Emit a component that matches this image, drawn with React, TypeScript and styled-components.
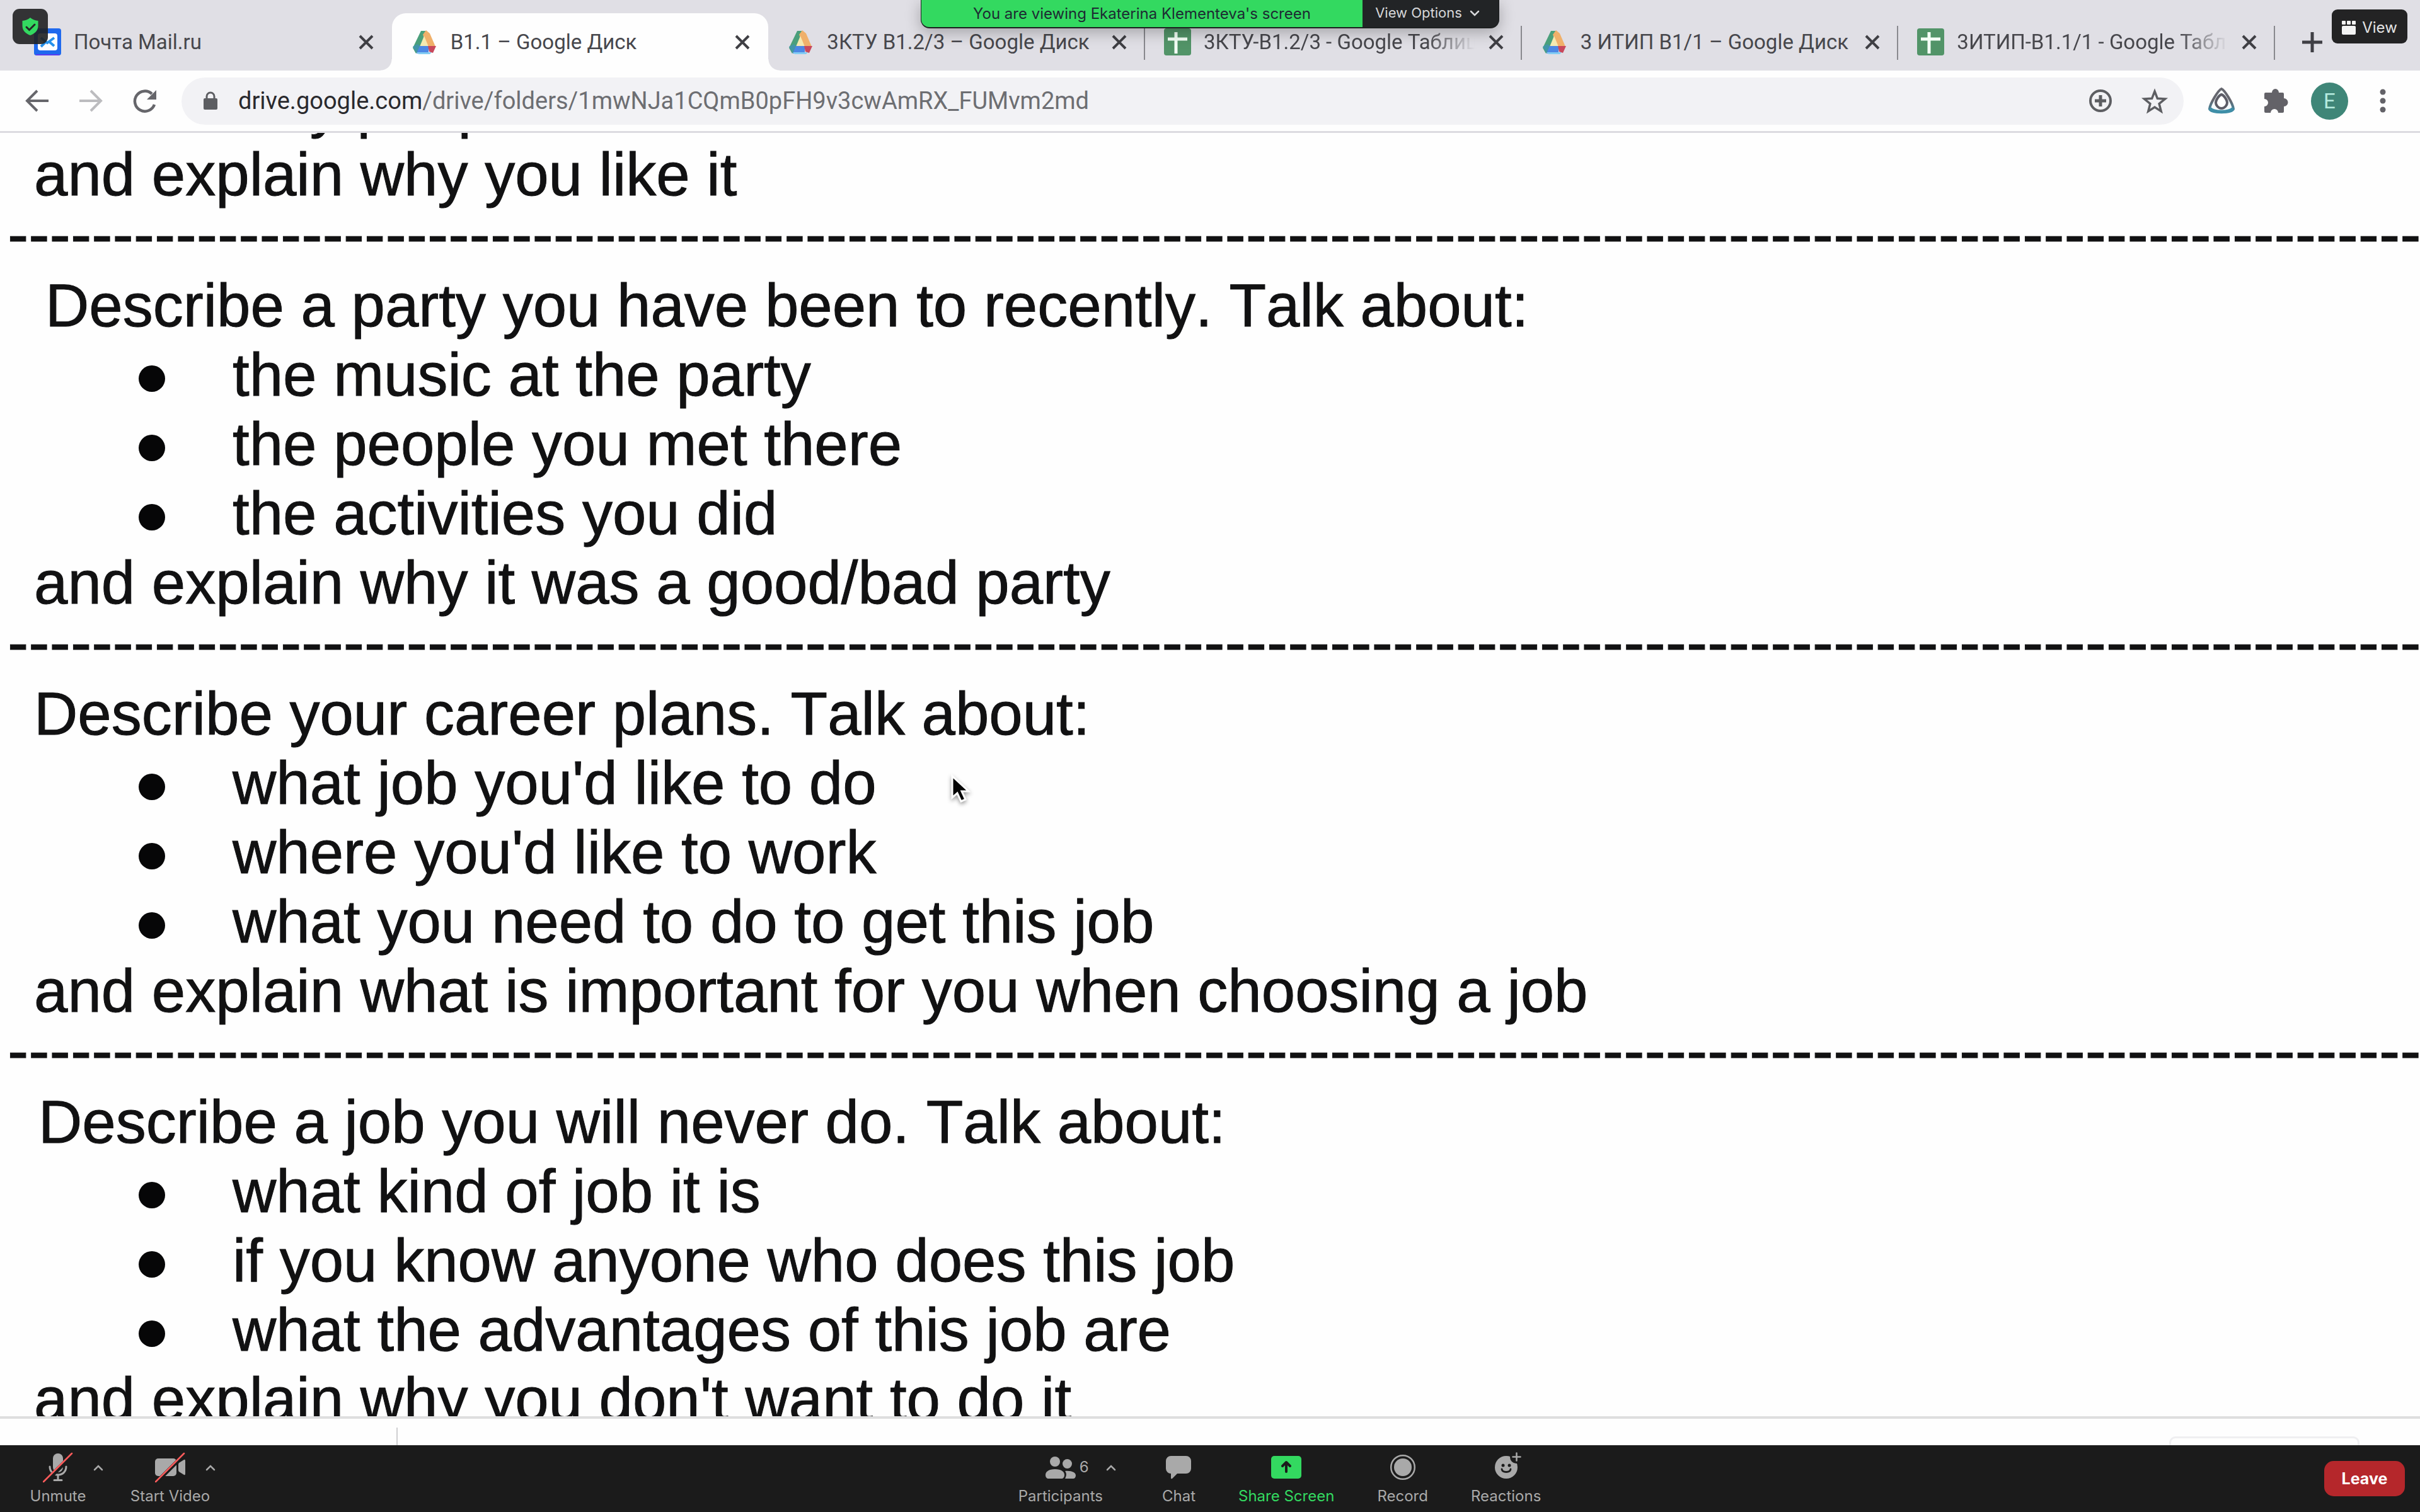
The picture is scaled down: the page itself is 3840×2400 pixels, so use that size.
import React from "react";
import styled, { createGlobalStyle, css } from "styled-components";

const GlobalStyle = createGlobalStyle`
  *, *::before, *::after { box-sizing: border-box; }
  html, body { margin: 0; background: #fefefe; }
  button { font: inherit; color: inherit; border: 0; padding: 0; background: none; cursor: pointer; }
  svg { display: block; }
`;

const UI_FONT = `Roboto, "Noto Sans", sans-serif`;
const MEETING_FONT = `Inter, "Liberation Sans", sans-serif`;
const DOC_FONT = `"Liberation Sans", Arial, sans-serif`;

const Screen = styled.div`
  position: relative;
  display: flex;
  flex-direction: column;
  height: 100vh;
  overflow: hidden;
  background: #fefefe;
`;

/* ---------- browser tabs ---------- */

const TabStrip = styled.nav`
  display: flex;
  align-items: stretch;
  flex: none;
  height: 112px;
  padding: 21px 230px 0 24px;
  background: #e0dfe5;
  font-family: ${UI_FONT};
  position: relative;
`;

const TabItem = styled.div<{ $active?: boolean; $divided?: boolean }>`
  position: relative;
  flex: 1 1 0;
  min-width: 0;
  display: flex;
  align-items: center;
  gap: 20px;
  padding: 0 27px 0 30px;
  color: #47474c;
  ${(p) =>
    p.$divided &&
    css`
      &::after {
        content: "";
        position: absolute;
        right: 0;
        top: 20px;
        width: 2px;
        height: 54px;
        background: #89898e;
      }
    `}
  ${(p) =>
    p.$active &&
    css`
      background: #fefefe;
      border-radius: 22px 22px 0 0;
      &::before,
      &::after {
        content: "";
        position: absolute;
        bottom: 0;
        width: 18px;
        height: 18px;
      }
      &::before {
        right: 100%;
        background: radial-gradient(circle at 0 0, transparent 17px, #fefefe 18px);
      }
      &::after {
        left: 100%;
        background: radial-gradient(circle at 100% 0, transparent 17px, #fefefe 18px);
      }
    `}
`;

const TabIcon = styled.span`
  flex: none;
  width: 43px;
  height: 43px;
`;

const TabTitle = styled.span<{ $fade?: boolean }>`
  flex: 1;
  min-width: 0;
  overflow: hidden;
  white-space: nowrap;
  font-size: 33px;
  line-height: 48px;
  ${(p) =>
    p.$fade &&
    css`
      mask-image: linear-gradient(to right, #000 calc(100% - 76px), transparent);
    `}
`;

const TabClose = styled.button`
  flex: none;
  width: 28px;
  height: 28px;
  color: #3f3f44;
`;

const NewTab = styled.button`
  position: absolute;
  right: 154px;
  top: 50px;
  width: 34px;
  height: 34px;
  color: #3f3f44;
`;

/* ---------- address bar ---------- */

const Toolbar = styled.div`
  display: flex;
  align-items: center;
  flex: none;
  height: 99px;
  padding: 0 46px 0 37px;
  border-bottom: 3px solid #dcdbe0;
  font-family: ${UI_FONT};
`;

const NavButtons = styled.div`
  display: flex;
  gap: 41px;
  margin-right: 37px;
`;

const NavButton = styled.button<{ $muted?: boolean }>`
  width: 44px;
  height: 44px;
  color: ${(p) => (p.$muted ? "#bcbcbf" : "#66666b")};
`;

const AddressBar = styled.div`
  flex: 1;
  min-width: 0;
  display: flex;
  align-items: center;
  height: 75px;
  padding: 0 24px 0 30px;
  border-radius: 38px;
  background: #f2f2f5;
  color: #5d5e62;
`;

const LockSlot = styled.span`
  width: 32px;
  height: 36px;
  margin-right: 28px;
`;

const Address = styled.div`
  flex: 1;
  min-width: 0;
  overflow: hidden;
  white-space: nowrap;
  font-size: 38px;
  line-height: 48px;
  color: #6d6e72;
`;

const Domain = styled.span`
  color: #29292d;
`;

const AddressActions = styled.div`
  display: flex;
  gap: 42px;
`;

const Extensions = styled.div`
  display: flex;
  align-items: center;
  gap: 42px;
  margin-left: 38px;
  color: #636268;
`;

const IconButton = styled.button<{ $wide?: number }>`
  width: ${(p) => p.$wide ?? 44}px;
  height: 44px;
`;

const Avatar = styled.button`
  width: 59px;
  height: 59px;
  margin-left: -8px;
  border-radius: 50%;
  background: #3f8678;
  color: #b5ece0;
  font-size: 33px;
  line-height: 59px;
`;

/* ---------- document ---------- */

const Page = styled.main`
  flex: 1;
  min-height: 0;
  overflow: hidden;
  font-family: ${DOC_FONT};
  font-size: 96px;
  line-height: 110px;
  font-kerning: none;
  -webkit-text-stroke: 1px #111112;
  color: #111112;
  white-space: nowrap;
`;

const Sheet = styled.article`
  margin-top: -99px;
  padding-left: 54px;
`;

const Prompt = styled.p<{ $indent?: number }>`
  margin: 0;
  padding-left: ${(p) => p.$indent ?? 0}px;
  font-size: inherit;
`;

const Points = styled.ul`
  margin: 0;
  padding: 0;
  list-style: none;
`;

const Point = styled.li`
  display: flex;
  align-items: center;
  padding-left: 166px;
  &::before {
    content: "";
    flex: none;
    width: 42px;
    height: 42px;
    margin: 12px 107px 0 0;
    border-radius: 50%;
    background: #060607;
  }
`;

const CutLine = styled.div`
  height: 98px;
  margin-left: -42px;
  overflow: hidden;
  font-size: 100px;
  line-height: 79px;
`;

const PageFooter = styled.footer`
  display: flex;
  justify-content: space-between;
  flex: none;
  height: 46px;
  padding: 0 96px 0 629px;
  border-top: 4px solid #dededf;
  background: #fefefe;
`;

const FooterRule = styled.span`
  width: 2px;
  margin-top: 14px;
  background: #cfcfd1;
`;

const FooterCard = styled.span`
  width: 302px;
  margin-top: 28px;
  border: 3px solid #efeff1;
  border-bottom: 0;
  border-radius: 10px 10px 0 0;
`;

/* ---------- meeting overlays ---------- */

const ShareBanner = styled.div`
  position: absolute;
  top: 0;
  left: 50%;
  transform: translateX(-50%);
  display: flex;
  height: 45px;
  overflow: hidden;
  border: solid #1d1f20;
  border-width: 0 1px 2px;
  border-radius: 0 0 14px 14px;
  background: #222426;
  box-shadow: 0 6px 24px rgba(0, 0, 0, 0.28);
  font-family: ${MEETING_FONT};
  font-size: 24px;
  line-height: 28px;
  white-space: nowrap;
`;

const BannerText = styled.span`
  display: flex;
  align-items: center;
  justify-content: center;
  width: 700px;
  background: #33d960;
  color: #1d2b33;
`;

const BannerMenu = styled.button`
  display: flex;
  align-items: center;
  justify-content: center;
  gap: 12px;
  width: 216px;
  padding: 0 10px 4px 0;
  color: #d6d7d9;
  font-size: 22px;
`;

const ShieldBadge = styled.button`
  position: absolute;
  left: 20px;
  top: 14px;
  width: 56px;
  height: 56px;
  padding: 13px 14px;
  border-radius: 11px;
  background: rgba(33, 34, 35, 0.91);
`;

const ViewButton = styled.button`
  position: absolute;
  right: 20px;
  top: 15px;
  display: flex;
  align-items: center;
  justify-content: center;
  gap: 10px;
  width: 120px;
  height: 54px;
  padding-top: 4px;
  border-radius: 9px;
  background: #232324;
  color: #e3e3e4;
  font-family: ${MEETING_FONT};
  font-size: 24px;
  line-height: 28px;
`;

const Pointer = styled.svg`
  position: absolute;
  left: 1506px;
  top: 1228px;
  filter: drop-shadow(0 3px 3px rgba(0, 0, 0, 0.4));
`;

/* ---------- meeting controls ---------- */

const MeetingBar = styled.div`
  display: flex;
  align-items: flex-start;
  justify-content: space-between;
  flex: none;
  height: 106px;
  padding: 0 24px 0 3px;
  background: #1b1b1b;
  color: #a9a9a9;
  font-family: ${MEETING_FONT};
  font-size: 24px;
  line-height: 28px;
`;

const ControlGroup = styled.div<{ $spread?: boolean }>`
  display: flex;
  padding-top: 11px;
  gap: ${(p) => (p.$spread ? 68 : 0)}px;
  margin-left: ${(p) => (p.$spread ? 14 : 0)}px;
`;

const Control = styled.div<{ $width?: number; $after?: number }>`
  position: relative;
  display: flex;
  justify-content: center;
  width: ${(p) => (p.$width ? `${p.$width}px` : "auto")};
  margin-right: ${(p) => p.$after ?? 0}px;
`;

const ControlButton = styled.button<{ $accent?: boolean }>`
  display: flex;
  flex-direction: column;
  align-items: center;
  gap: 8px;
  white-space: nowrap;
  color: ${(p) => (p.$accent ? "#33d960" : "inherit")};
`;

const ControlIcon = styled.span`
  position: relative;
  width: 48px;
  height: 48px;
`;

const Count = styled.span`
  position: absolute;
  left: calc(100% + 6px);
  top: 10px;
`;

const Caret = styled.button<{ $far?: boolean }>`
  position: absolute;
  left: calc(50% + ${(p) => (p.$far ? 72 : 56)}px);
  top: 17px;
  width: 16px;
  height: 16px;
`;

const LeaveButton = styled.button`
  width: 128px;
  height: 56px;
  margin-top: 25px;
  border-radius: 15px;
  background: #b5272b;
  color: #fff;
  font-size: 25px;
  font-weight: 700;
`;

/* ---------- drawings ---------- */

const MailLogo = () => (
  <svg viewBox="0 0 43 43" width="43" height="43">
    <rect width="43" height="43" rx="4" fill="#1f69ee" />
    <path d="M2 41h39l-2 2H4z" fill="#5a3df0" />
    <rect x="6" y="8" width="31" height="27" rx="4" fill="#fdfdff" />
    <path d="M11 15l10 8 11-8M11 29l7-7M32 28l-7-6" stroke="#2590ea" strokeWidth="4" fill="none" />
  </svg>
);

const DriveLogo = () => (
  <svg viewBox="0 0 43 43" width="43" height="43">
    <path d="M16 4h8l-2 9-9 20-5 7-5-9z" fill="#4a9f7b" />
    <path d="M24 3l6 5 9 21H27L19 10z" fill="#f0b06a" />
    <path d="M21 12l7 17H14z" fill="#f4e9b0" />
    <path d="M3 29l8-4 4 4-5 11z" fill="#4295a8" />
    <path d="M14 28h14v12H9z" fill="#4c87e4" />
    <path d="M27 28h13l-5 11-6-2z" fill="#c8485c" />
    <path d="M9 38h24l-3 3H12z" fill="#84cdf3" />
  </svg>
);

const SheetsLogo = () => (
  <svg viewBox="0 0 43 43" width="43" height="43">
    <rect width="43" height="43" rx="4" fill="#529468" />
    <path d="M6 17h31M19 6v34" stroke="#f4fff6" strokeWidth="5" />
  </svg>
);

const CrossIcon = () => (
  <svg viewBox="0 0 28 28" width="28" height="28">
    <path d="M4 4l20 20M24 4L4 24" stroke="currentColor" strokeWidth="4" />
  </svg>
);

const PlusIcon = () => (
  <svg viewBox="0 0 34 34" width="34" height="34">
    <path d="M17 1v32M1 17h32" stroke="currentColor" strokeWidth="5" />
  </svg>
);

const BackIcon = () => (
  <svg viewBox="0 0 44 44" width="44" height="44">
    <path d="M40 22H7M22 6L6 22l16 16" stroke="currentColor" strokeWidth="4" fill="none" />
  </svg>
);

const ForwardIcon = () => (
  <svg viewBox="0 0 44 44" width="44" height="44">
    <path d="M4 22h33M22 6l16 16-16 16" stroke="currentColor" strokeWidth="4" fill="none" />
  </svg>
);

const ReloadIcon = () => (
  <svg viewBox="0 0 44 44" width="44" height="44">
    <path d="M38 28A16 16 0 1 1 34 11" stroke="currentColor" strokeWidth="4.500" fill="none" />
    <path d="M41 5v15H26z" fill="currentColor" />
  </svg>
);

const LockIcon = () => (
  <svg viewBox="0 0 32 36" width="32" height="36">
    <rect x="5" y="14" width="22" height="18" rx="2" fill="currentColor" />
    <path d="M10 14v-3a6 6 0 0 1 12 0v3" stroke="currentColor" strokeWidth="3" fill="none" />
  </svg>
);

const ZoomIcon = () => (
  <svg viewBox="0 0 44 44" width="44" height="44">
    <circle cx="22" cy="22" r="16" stroke="currentColor" strokeWidth="4" fill="none" />
    <path d="M22 13v18M13 22h18" stroke="currentColor" strokeWidth="5" />
  </svg>
);

const StarIcon = () => (
  <svg viewBox="0 0 44 44" width="44" height="44">
    <path
      d="M22 7l4.400 11.300 12.100.7-9.400 7.700 3.100 11.900L22 32l-10.200 6.600 3.100-11.900L5.500 19l12.100-.7z"
      stroke="currentColor"
      strokeWidth="3.500"
      fill="none"
    />
  </svg>
);

const TriangleIcon = () => (
  <svg viewBox="0 0 44 44" width="44" height="44">
    <defs>
      <linearGradient id="tri" x1="0" y1="0" x2="0" y2="1">
        <stop offset="0.500" stopColor="#66676f" />
        <stop offset="1" stopColor="#3d8ba6" />
      </linearGradient>
    </defs>
    <path
      d="M22 3C27 5 40 26 41 35c-3 7-35 7-38 0C4 26 17 5 22 3z"
      stroke="url(#tri)"
      strokeWidth="4"
      fill="#f6fbfd"
    />
    <path d="M4 34c4 7 32 7 36 0" stroke="#3f8fa8" strokeWidth="5" fill="none" />
    <path
      d="M22 12c4 1 9 9 9 13s-4 9-9 9-9-5-9-9 5-12 9-13z"
      stroke="#5c5c66"
      strokeWidth="4"
      fill="#fff"
    />
  </svg>
);

const PuzzleIcon = () => (
  <svg viewBox="0 0 44 44" width="44" height="44">
    <path
      d="M4 11q0-2 2-2h10a5.500 6 0 0 1 11 0h6q2 0 2 2v7a5.500 5.500 0 0 1 0 13v8q0 2-2 2h-7a6 6 0 0 0-12 0H6q-2 0-2-2v-8a6 6 0 0 0 0-12z"
      fill="currentColor"
    />
  </svg>
);

const DotsIcon = () => (
  <svg viewBox="0 0 26 44" width="26" height="44">
    <circle cx="13" cy="8" r="4.500" fill="currentColor" />
    <circle cx="13" cy="22" r="4.500" fill="currentColor" />
    <circle cx="13" cy="36" r="4.500" fill="currentColor" />
  </svg>
);

const ShieldIcon = () => (
  <svg viewBox="0 0 28 30" width="28" height="30">
    <path d="M14 1c3.500 3 8 4.500 12.500 5v8c0 7-5 12.500-12.500 15C6.500 26.500 1.500 21 1.500 14V6C6 5.500 10.500 4 14 1z" fill="#33d960" />
    <path d="M8 16l4.500 4.500L21 12" stroke="#232526" strokeWidth="3" fill="none" strokeLinecap="round" />
  </svg>
);

const GalleryIcon = () => (
  <svg viewBox="0 0 22 22" width="22" height="22" fill="#f4f4f4">
    <rect width="6" height="6" rx="1" />
    <rect x="8" width="6" height="6" rx="1" />
    <rect x="16" width="6" height="6" rx="1" />
    <rect y="8" width="22" height="14" rx="2" />
  </svg>
);

const ChevronDown = () => (
  <svg viewBox="0 0 16 16" width="16" height="16">
    <path d="M2 6l6 6 6-6" stroke="currentColor" strokeWidth="2.500" fill="none" strokeLinecap="round" />
  </svg>
);

const ChevronUp = () => (
  <svg viewBox="0 0 16 16" width="16" height="16">
    <path d="M2 11l6-6 6 6" stroke="currentColor" strokeWidth="2.500" fill="none" strokeLinecap="round" />
  </svg>
);

const MicOffIcon = () => (
  <svg viewBox="0 0 48 48" width="48" height="48">
    <rect x="16" y="2" width="16" height="30" rx="8" fill="#a9a9a9" />
    <path d="M11 23c0 7 5 13 13 13s13-6 13-13" stroke="#a9a9a9" strokeWidth="3" fill="none" strokeLinecap="round" />
    <path d="M24 36v8M18 44.500h12" stroke="#a9a9a9" strokeWidth="3" strokeLinecap="round" />
    <path d="M4 47L50 1" stroke="#1b1b1b" strokeWidth="7" />
    <path d="M1 47L46 2" stroke="#ff5b5b" strokeWidth="2.500" strokeLinecap="round" />
  </svg>
);

const VideoOffIcon = () => (
  <svg viewBox="0 0 48 48" width="48" height="48">
    <rect x="0" y="10" width="34" height="28" rx="5" fill="#a9a9a9" />
    <path d="M38 17l8-5q2-1 2 2v20q0 3-2 2l-8-5q-1-1-1-3v-8q0-2 1-3z" fill="#a9a9a9" />
    <path d="M3 47L49 1" stroke="#1b1b1b" strokeWidth="6" />
    <path d="M1 47L46 2" stroke="#ff5b5b" strokeWidth="2.500" strokeLinecap="round" />
  </svg>
);

const PeopleIcon = () => (
  <svg viewBox="0 0 48 48" width="48" height="48" fill="#a9a9a9">
    <circle cx="15" cy="15" r="8" />
    <circle cx="34.500" cy="18.500" r="7.500" />
    <path d="M0 36c0-5 5-9 15-9s15 4 15 9c0 4-2 6-5 6H5c-3 0-5-2-5-6z" />
    <path d="M31 30c10-1 17 2 17 7 0 3-2 5-4 5H31c2-4 3-8 0-12z" />
  </svg>
);

const ChatIcon = () => (
  <svg viewBox="0 0 48 48" width="48" height="48">
    <path d="M12 6h24a8 8 0 0 1 8 8v12a8 8 0 0 1-8 8H22l-8 8q-2 1-2-1v-7a8 8 0 0 1-8-8V14a8 8 0 0 1 8-8z" fill="#a9a9a9" />
  </svg>
);

const ShareIcon = () => (
  <svg viewBox="0 0 48 48" width="48" height="48">
    <rect y="6" width="48" height="36" rx="5" fill="#33d960" />
    <path d="M24 31V17M18 22l6-6 6 6" stroke="#1b1b1b" strokeWidth="4" fill="none" strokeLinecap="round" strokeLinejoin="round" />
  </svg>
);

const RecordIcon = () => (
  <svg viewBox="0 0 48 48" width="48" height="48">
    <circle cx="24" cy="24" r="18.800" stroke="#a9a9a9" strokeWidth="2.500" fill="none" />
    <circle cx="24" cy="24" r="14" fill="#a9a9a9" />
  </svg>
);

const ReactionIcon = () => (
  <svg viewBox="0 0 48 48" width="48" height="48">
    <circle cx="24" cy="24" r="18" fill="#a9a9a9" />
    <circle cx="40" cy="8" r="10" fill="#1b1b1b" />
    <path d="M40.500 1.500v12M34.500 7.500h12" stroke="#a9a9a9" strokeWidth="2.500" strokeLinecap="round" />
    <circle cx="19" cy="21" r="2.500" fill="#1b1b1b" />
    <circle cx="29" cy="21" r="2.500" fill="#1b1b1b" />
    <path d="M17 27c1 6 13 6 14 0" stroke="#1b1b1b" strokeWidth="2.800" fill="none" strokeLinecap="round" />
  </svg>
);

/* ---------- content ---------- */

const tabs = [
  { title: "Почта Mail.ru", logo: <MailLogo /> },
  { title: "B1.1 – Google Диск", logo: <DriveLogo />, active: true },
  { title: "3КТУ B1.2/3 – Google Диск", logo: <DriveLogo />, divided: true },
  { title: "3КТУ-B1.2/3 - Google Таблицы", logo: <SheetsLogo />, divided: true, fade: true },
  { title: "3 ИТИП B1/1 – Google Диск", logo: <DriveLogo />, divided: true },
  { title: "3ИТИП-B1.1/1 - Google Таблицы", logo: <SheetsLogo />, divided: true, fade: true },
];

const cards = [
  {
    title: "Describe a party you have been to recently. Talk about:",
    indent: 18,
    points: ["the music at the party", "the people you met there", "the activities you did"],
    closing: "and explain why it was a good/bad party",
  },
  {
    title: "Describe your career plans. Talk about:",
    indent: 0,
    points: ["what job you'd like to do", "where you'd like to work", "what you need to do to get this job"],
    closing: "and explain what is important for you when choosing a job",
  },
  {
    title: "Describe a job you will never do. Talk about:",
    indent: 7,
    points: ["what kind of job it is", "if you know anyone who does this job", "what the advantages of this job are"],
    closing: "and explain why you don't want to do it",
  },
];

const hyphens = "-".repeat(120);

export default function App() {
  return (
    <>
      <GlobalStyle />
      <Screen>
        <TabStrip aria-label="Tabs">
          {tabs.map((t) => (
            <TabItem key={t.title} $active={t.active} $divided={t.divided}>
              <TabIcon>{t.logo}</TabIcon>
              <TabTitle $fade={t.fade}>{t.title}</TabTitle>
              <TabClose aria-label="Close tab">
                <CrossIcon />
              </TabClose>
            </TabItem>
          ))}
          <NewTab aria-label="New tab">
            <PlusIcon />
          </NewTab>
        </TabStrip>

        <Toolbar>
          <NavButtons>
            <NavButton aria-label="Back"><BackIcon /></NavButton>
            <NavButton aria-label="Forward" $muted><ForwardIcon /></NavButton>
            <NavButton aria-label="Reload"><ReloadIcon /></NavButton>
          </NavButtons>
          <AddressBar>
            <LockSlot><LockIcon /></LockSlot>
            <Address role="textbox" aria-label="Address">
              <Domain>drive.google.com</Domain>/drive/folders/1mwNJa1CQmB0pFH9v3cwAmRX_FUMvm2md
            </Address>
            <AddressActions>
              <IconButton aria-label="Zoom"><ZoomIcon /></IconButton>
              <IconButton aria-label="Bookmark"><StarIcon /></IconButton>
            </AddressActions>
          </AddressBar>
          <Extensions>
            <IconButton aria-label="Extension"><TriangleIcon /></IconButton>
            <IconButton aria-label="Extensions"><PuzzleIcon /></IconButton>
            <Avatar aria-label="Profile">E</Avatar>
            <IconButton aria-label="Menu" $wide={26}><DotsIcon /></IconButton>
          </Extensions>
        </Toolbar>

        <Page>
          <Sheet>
            <Points>
              <Point>why people like it</Point>
            </Points>
            <Prompt>and explain why you like it</Prompt>
            {cards.map((c) => (
              <section key={c.title}>
                <CutLine>{hyphens}</CutLine>
                <Prompt $indent={c.indent}>{c.title}</Prompt>
                <Points>
                  {c.points.map((p) => (
                    <Point key={p}>{p}</Point>
                  ))}
                </Points>
                <Prompt>{c.closing}</Prompt>
              </section>
            ))}
          </Sheet>
        </Page>

        <PageFooter>
          <FooterRule />
          <FooterCard />
        </PageFooter>

        <MeetingBar>
          <ControlGroup>
            <Control $width={178}>
              <ControlButton>
                <ControlIcon><MicOffIcon /></ControlIcon>
                Unmute
              </ControlButton>
              <Caret aria-label="Audio options"><ChevronUp /></Caret>
            </Control>
            <Control $width={178}>
              <ControlButton>
                <ControlIcon><VideoOffIcon /></ControlIcon>
                Start Video
              </ControlButton>
              <Caret aria-label="Video options"><ChevronUp /></Caret>
            </Control>
          </ControlGroup>
          <ControlGroup $spread>
            <Control $after={26}>
              <ControlButton>
                <ControlIcon>
                  <PeopleIcon />
                  <Count>6</Count>
                </ControlIcon>
                Participants
              </ControlButton>
              <Caret $far aria-label="Participant options"><ChevronUp /></Caret>
            </Control>
            <Control>
              <ControlButton>
                <ControlIcon><ChatIcon /></ControlIcon>
                Chat
              </ControlButton>
            </Control>
            <Control>
              <ControlButton $accent>
                <ControlIcon><ShareIcon /></ControlIcon>
                Share Screen
              </ControlButton>
            </Control>
            <Control>
              <ControlButton>
                <ControlIcon><RecordIcon /></ControlIcon>
                Record
              </ControlButton>
            </Control>
            <Control>
              <ControlButton>
                <ControlIcon><ReactionIcon /></ControlIcon>
                Reactions
              </ControlButton>
            </Control>
          </ControlGroup>
          <LeaveButton>Leave</LeaveButton>
        </MeetingBar>

        <Pointer viewBox="0 0 34 50" width="34" height="50">
          <path d="M5 4v34l8-7 6 13 7-3-6-13h11z" fill="#050505" stroke="#fff" strokeWidth="3" />
        </Pointer>

        <ShieldBadge aria-label="Meeting information"><ShieldIcon /></ShieldBadge>
        <ShareBanner>
          <BannerText>You are viewing Ekaterina Klementeva's screen</BannerText>
          <BannerMenu>
            View Options
            <ChevronDown />
          </BannerMenu>
        </ShareBanner>
        <ViewButton>
          <GalleryIcon />
          View
        </ViewButton>
      </Screen>
    </>
  );
}
